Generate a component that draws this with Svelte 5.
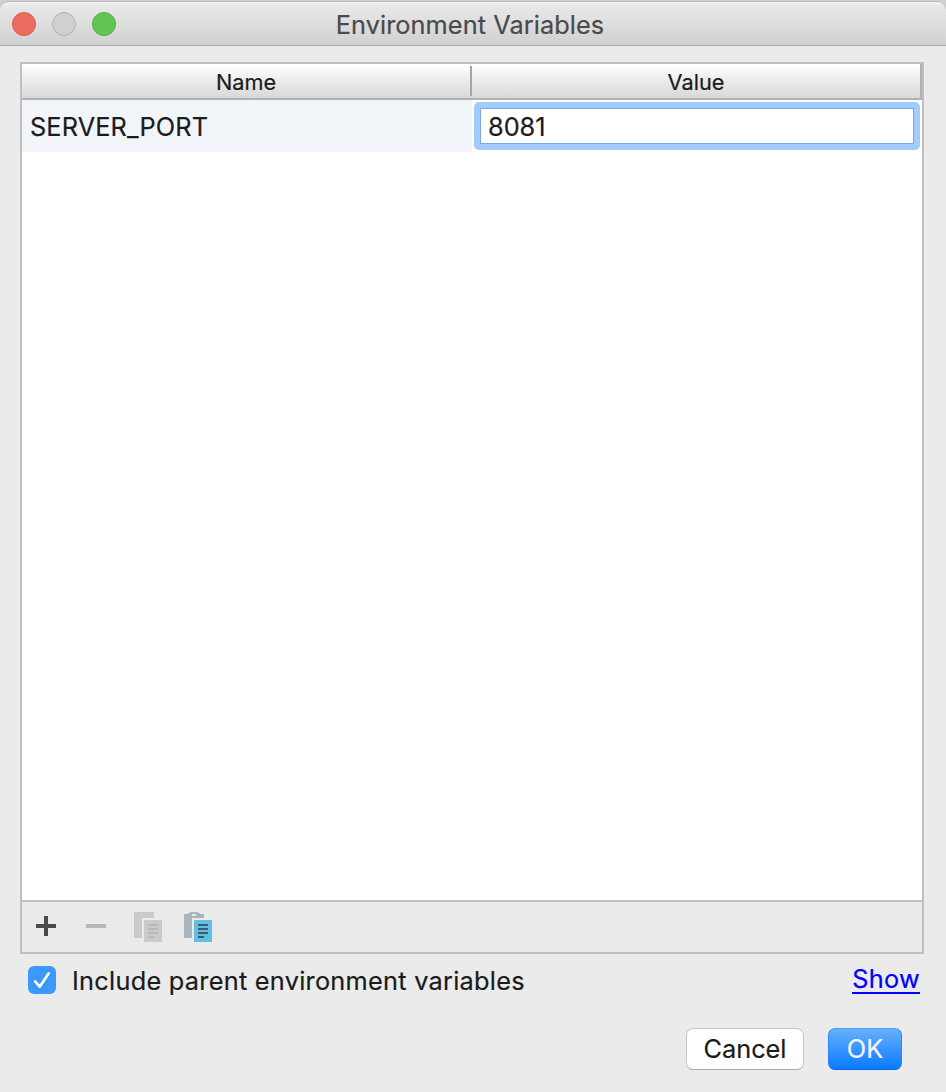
<script>
  let name = $state('SERVER_PORT');
  let value = $state('8081');
  let include = $state(true);
</script>

<div class="window">
  <header>
    <div class="lights">
      <span class="light close"></span>
      <span class="light minimize"></span>
      <span class="light zoom"></span>
    </div>
    <h1><span class="t-title">Environment Variables</span></h1>
  </header>

  <section class="table">
    <div class="head">
      <div class="col"><span>Name</span></div>
      <i class="divider"></i>
      <div class="col"><span>Value</span></div>
    </div>
    <div class="row">
      <div class="cell"><span class="t-port">{name}</span></div>
      <div class="editor"><div class="field"><span>{value}</span></div></div>
    </div>
    <div class="empty"></div>
    <svg class="tools" width="900" height="50" viewBox="22 902 900 50" shape-rendering="crispEdges">
      <path fill="#4a4a4a" d="M44 916h4v8h8v4h-8v8h-4v-8h-8v-4h8z" />
      <path fill="#b7b7b7" d="M86 924h20v4H86z" />
      <path fill="#cacaca" d="M134 912h20v6h-12v20h-8zM144 920h18v22h-18z" />
      <path fill="#b9b9b9" d="M148 924h10v2h-10zM148 928h10v2h-10zM148 932h10v2h-10zM148 936h6v2h-6z" />
      <path fill="#a9b4bc" fill-rule="evenodd" d="M184 914h4v-1h2v-1h8v1h2v1h4v4h-12v20h-8zM192 914v2h4v-2z" />
      <path fill="#62bfe2" d="M194 920h18v22h-18z" />
      <path fill="#3c5c69" d="M198 924h10v2h-10zM198 928h10v2h-10zM198 932h10v2h-10zM198 936h6v2h-6z" />
    </svg>
  </section>

  <div class="options">
    <button class="check" aria-label="Include parent environment variables" aria-pressed={include} onclick={() => (include = !include)}>
      {#if include}
        <svg width="28" height="28" viewBox="0 0 28 28"><path d="M7.2 15.6l4.6 5.2L20.6 7.5" fill="none" stroke="#fff" stroke-width="2.8" stroke-linecap="round" stroke-linejoin="round" /></svg>
      {/if}
    </button>
    <span class="t-include">Include parent environment variables</span>
    <a href="#show"><span>Show</span></a>
  </div>

  <footer>
    <button class="btn cancel"><span>Cancel</span></button>
    <button class="btn ok"><span>OK</span></button>
  </footer>
</div>

<style>
  :global(body) { background: #d0d0d0; }
  .window {
    box-sizing: border-box; width: 946px; height: 1092px; overflow: hidden; padding-top: 1px;
    display: flex; flex-direction: column;
    background: linear-gradient(#d0d0d0 20px, #ebebeb 20px);
    font: 400 25.3px/32px Inter, sans-serif; color: #1b1b1b;
    -webkit-text-stroke-width: 0.2px;
  }
  span { white-space: nowrap; }
  header {
    box-sizing: border-box; height: 45px; flex: none; display: grid; grid-template-columns: 134px 1fr 140px;
    align-items: center; border-top: 1px solid #b5b5b5; border-bottom: 1px solid #acacac;
    background: linear-gradient(#f7f7f7, #e9e9e9 3px, #d1d1d1 42px, #c4c4c4);
    border-radius: 9px 9px 0 0;
  }
  .lights { display: flex; gap: 16px; padding: 1px 0 0 12px; }
  .light { box-sizing: border-box; width: 24px; height: 24px; border-radius: 50%; border: 1px solid; }
  .close { background: #ed6b5f; border-color: #d9584d; }
  .minimize { background: #d0d0d0; border-color: #b3b3b3; }
  .zoom { background: #61c554; border-color: #4fae40; }
  h1 { margin: 2px 0 0; font: inherit; color: #4a4a4a; text-align: center; }
  .table {
    box-sizing: border-box; width: 904px; height: 892px; flex: none; margin: 16px 0 0 20px;
    border: 2px solid #bfbfbf; background: #fff; display: flex; flex-direction: column;
  }
  .head {
    box-sizing: border-box; height: 36px; display: grid; grid-template-columns: 448px 2px 448px;
    align-items: center; border-bottom: 2px solid #b1b1b1; border-right: 2px solid #b1b1b1;
    background: linear-gradient(#fff, #d8d8d8); font-size: 21.7px;
  }
  .col { text-align: center; padding-top: 2px; }
  .divider { height: 30px; background: #a5a5a5; }
  .row { height: 52px; display: flex; }
  .cell { box-sizing: border-box; width: 450px; padding: 11px 8px; background: #f1f5fa; }
  .editor {
    box-sizing: border-box; width: 446px; height: 48px; margin: 2px; padding: 6px;
    border-radius: 5px; background: #a2ccfe;
  }
  .field { box-sizing: border-box; height: 36px; border: 1px solid #7ba7dc; background: #fff; padding: 2px 7px; }
  .empty { flex: 1; }
  .tools { display: block; border-top: 2px solid #bfbfbf; background: #ebebeb; }
  .options { display: flex; height: 28px; margin: 12px 26px 0 28px; align-items: center; }
  .check { width: 28px; height: 28px; padding: 0; border: 0; border-radius: 6px; background: #3b99fc; margin-right: 16px; }
  .check svg { display: block; filter: drop-shadow(0 1px 1px #1667c055); }
  .t-include { margin-top: 2px; letter-spacing: 0.27px; }
  a { margin-left: auto; height: 28px; line-height: 26px; box-sizing: border-box; border-bottom: 2px solid #00f; color: #00f; text-decoration: none; letter-spacing: 0.3px; }
  footer { display: flex; gap: 24px; justify-content: flex-end; margin: 34px 44px 0 0; }
  .btn { box-sizing: border-box; height: 42px; padding: 0; border: 1px solid #c6c6c6; border-bottom-color: #aaa; border-radius: 7px; background: #fff; color: #1b1b1b; font: inherit; }
  .cancel { width: 118px; }
  .ok { width: 74px; color: #f3f3f3; border-color: #4b9ffa #2b85f5 #0b62f0; background: linear-gradient(#66b0fd, #097aff); }
  .t-title { letter-spacing: 0.08px; }
  .t-port { letter-spacing: 0.13px; }
</style>
